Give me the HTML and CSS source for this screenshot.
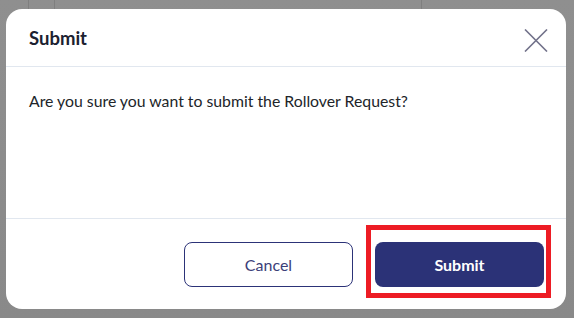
FILE: index.html
```html
<!DOCTYPE html>
<html lang="en">
<head>
<meta charset="utf-8">
<title>Submit</title>
<link rel="stylesheet" href="styles.css">
</head>
<body>
<div class="backdrop">
  <div class="bg-line l1"></div>
  <div class="bg-line l2"></div>
  <div class="bg-line l3"></div>
  <div class="modal">
    <div class="modal-header">
      <h2 class="modal-title">Submit</h2>
      <button class="close" aria-label="Close">
        <svg width="24" height="23" viewBox="0 0 24 23"><path d="M1 0.5 L23 22.5 M23 0.5 L1 22.5" stroke="#72728a" stroke-width="1.6" fill="none"/></svg>
      </button>
    </div>
    <div class="modal-body">
      <p class="message">Are you sure you want to submit the Rollover Request?</p>
    </div>
    <div class="modal-footer">
      <button class="btn btn-outline">Cancel</button>
      <div class="highlight-wrap">
        <button class="btn btn-primary">Submit</button>
        <div class="highlight"></div>
      </div>
    </div>
  </div>
</div>
</body>
</html>
```
FILE: styles.css
```css
html, body {
  margin: 0;
  padding: 0;
}
body {
  width: 574px;
  height: 318px;
  overflow: hidden;
  font-family: "Lato", "Noto Sans", sans-serif;
}
.backdrop {
  position: relative;
  width: 574px;
  height: 318px;
  background: linear-gradient(#8f8f8f, #898989);
  padding: 9px 8px 9px 6px;
  box-sizing: border-box;
}
.bg-line {
  position: absolute;
  top: 0;
  width: 1px;
  height: 9px;
  background: #7f7f7f;
}
.l1 { left: 28px; }
.l2 { left: 54px; }
.l3 { left: 421px; }
.modal {
  position: relative;
  width: 560px;
  height: 300px;
  background: #fff;
  border-radius: 16px;
  display: flex;
  flex-direction: column;
}
.modal-header {
  height: 58px;
  box-sizing: border-box;
  border-bottom: 1px solid #e1e7ef;
  display: flex;
  align-items: center;
  justify-content: space-between;
  padding: 0 18px 0 23px;
}
.modal-title {
  margin: 0;
  font-size: 18.5px;
  font-weight: 700;
  color: #1b2130;
  line-height: 1;
  padding-top: 1px;
}
.close {
  border: 0;
  background: none;
  padding: 0;
  width: 24px;
  height: 23px;
  margin-top: 5px;
  display: flex;
}
.modal-body {
  height: 152px;
  box-sizing: border-box;
  border-bottom: 1px solid #e1e7ef;
  padding: 23px 23px 0;
}
.message {
  margin: 0;
  font-size: 15.8px;
  color: #212529;
  line-height: 22px;
}
.modal-footer {
  flex: 1;
  display: flex;
  justify-content: flex-end;
  align-items: flex-start;
  gap: 22px;
  padding: 23px 22px 0 0;
}
.btn {
  width: 169px;
  height: 45px;
  border-radius: 8px;
  font-family: inherit;
  font-size: 16px;
  cursor: pointer;
  box-sizing: border-box;
}
.btn-outline {
  background: #fff;
  border: 1.5px solid #2c3378;
  color: #3b4079;
}
.btn-primary {
  background: #2b3277;
  border: 0;
  color: #fff;
  font-weight: 700;
  display: block;
}
.highlight-wrap {
  position: relative;
}
.highlight {
  position: absolute;
  left: -9px;
  top: -17px;
  width: 185px;
  height: 73px;
  box-sizing: border-box;
  border: 5px solid #ed1c24;
  pointer-events: none;
}
```
